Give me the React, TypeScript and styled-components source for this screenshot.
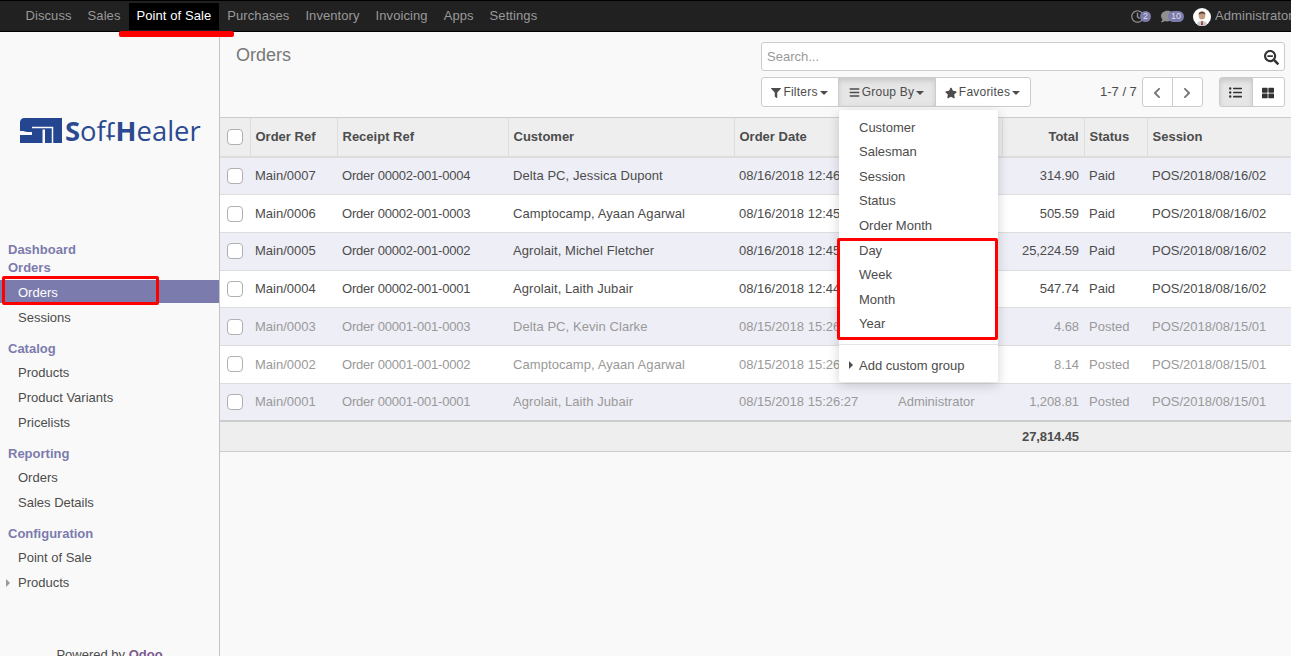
import React from "react";
import styled, { createGlobalStyle } from "styled-components";
import {
  FaBars,
  FaChevronLeft,
  FaChevronRight,
  FaComment,
  FaFilter,
  FaListUl,
  FaRegClock,
  FaSearchMinus,
  FaStar,
  FaThLarge,
} from "react-icons/fa";

const GlobalStyle = createGlobalStyle`
  html, body {
    margin: 0;
    height: 100%;
    overflow: hidden;
    background: #f9f9f9;
    font-family: "Liberation Sans", Arial, sans-serif;
    font-size: 13px;
    line-height: 1.42857;
    color: #4c4c4c;
  }
  * { box-sizing: border-box; }
`;

const Page = styled.div`
  position: relative;
  width: 1291px;
  height: 656px;
  overflow: hidden;
`;

const TopBar = styled.nav`
  display: flex;
  align-items: stretch;
  justify-content: space-between;
  height: 32px;
  padding: 2px 0 1px 17.5px;
  background: #212121;
  border-top: 1px solid #000;
  border-bottom: 1px solid #000;
  letter-spacing: 0.08px;
`;

const NavGroup = styled.div`
  display: flex;
  align-items: stretch;
`;

const NavItem = styled.a<{ $active?: boolean }>`
  display: flex;
  align-items: center;
  padding: 0 8px;
  color: ${(p) => (p.$active ? "#fff" : "#999")};
  background: ${(p) => (p.$active ? "#000" : "transparent")};
`;

const Systray = styled.div`
  display: flex;
  align-items: center;
  width: 160px;
  flex-shrink: 0;
  white-space: nowrap;
  color: #999;
`;

const TrayIcon = styled.span<{ $width: number }>`
  position: relative;
  display: flex;
  align-items: center;
  flex: 0 0 ${(p) => p.$width}px;
  height: 14px;
  font-size: 13px;
  color: #8f8f8f;
`;

const Badge = styled.span<{ $left: number }>`
  position: absolute;
  left: ${(p) => p.$left}px;
  top: 1px;
  min-width: 11px;
  height: 11px;
  padding: 0 3px;
  border-radius: 6px;
  background: #7c7bad;
  color: #ddd;
  font-size: 9px;
  line-height: 11px;
  letter-spacing: 0;
  text-align: center;
`;

const Avatar = styled.svg`
  width: 18px;
  height: 18px;
  margin-right: 4px;
  flex-shrink: 0;
`;

const Body = styled.div`
  display: flex;
  height: 624px;
`;

const Sidebar = styled.aside`
  flex: 0 0 220px;
  display: flex;
  flex-direction: column;
  overflow: hidden;
  border-right: 1px solid #c4c4c4;
  background: #f9f9f9;
  & > * {
    flex-shrink: 0;
  }
`;

const LogoArea = styled.div`
  height: 209px;
  padding: 86px 0 0 20px;
  display: flex;
  align-items: flex-start;
`;

const LogoWord = styled.span`
  font-family: "Open Sans", sans-serif;
  font-size: 27.4px;
  line-height: 26px;
  color: #2b4a91;
  margin-left: 3px;
  white-space: nowrap;
`;

const LogoHeavy = styled.b`
  font-weight: 700;
`;

const LogoFlip = styled.span`
  display: inline-block;
  transform: scaleY(-1) translateY(-1px);
`;

const SectionTitle = styled.div<{ $spaced?: boolean }>`
  padding-left: 8px;
  height: 18px;
  line-height: 18px;
  margin-top: ${(p) => (p.$spaced ? "9.5px" : "0")};
  font-weight: 700;
  color: #7c7bad;
`;

const MenuList = styled.div<{ $top: number }>`
  margin-top: ${(p) => p.$top}px;
`;

const MenuItem = styled.a<{ $active?: boolean; $caret?: boolean }>`
  position: relative;
  display: block;
  padding: ${(p) => (p.$active ? "4px" : "3px")} 0 3px 18px;
  height: ${(p) => (p.$active ? "23px" : "24.8px")};
  margin-bottom: ${(p) => (p.$active ? "2.8px" : "0")};
  color: ${(p) => (p.$active ? "#fff" : "#4c4c4c")};
  background: ${(p) => (p.$active ? "#7c7bad" : "transparent")};
  ${(p) =>
    p.$caret &&
    `&::before {
      content: "";
      position: absolute;
      left: 6px;
      top: 8px;
      border-left: 4px solid #999;
      border-top: 4px solid transparent;
      border-bottom: 4px solid transparent;
    }`}
`;

const PoweredBy = styled.div`
  margin-top: 50.5px;
  text-align: center;
  color: #4c4c4c;
`;

const OdooLink = styled.span`
  font-weight: 700;
  color: #7c5a8f;
`;

const Main = styled.main`
  flex: 1;
  min-width: 0;
`;

const ControlPanel = styled.div`
  display: grid;
  grid-template-columns: 1fr 524px;
  grid-template-rows: 29px 30px;
  row-gap: 6px;
  height: 85px;
  padding: 10px 6px 0 16px;
`;

const Title = styled.h1`
  margin: 0;
  font-size: 18px;
  font-weight: 400;
  line-height: 26px;
  color: #777;
`;

const SearchBox = styled.div`
  display: flex;
  align-items: center;
  justify-content: space-between;
  padding: 2px 5px 0 5px;
  background: #fff;
  border: 1px solid #ccc;
  border-radius: 3px;
  color: #999;
`;

const SearchIcon = styled(FaSearchMinus)`
  width: 15px;
  height: 15px;
  color: #333;
`;

const Tools = styled.div`
  grid-column: 2;
  display: flex;
  align-items: stretch;
`;

const ButtonGroup = styled.div`
  display: flex;
`;

const ToolButton = styled.button<{ $active?: boolean; $w: number }>`
  display: flex;
  align-items: center;
  justify-content: center;
  gap: 2px;
  width: ${(p) => p.$w}px;
  margin-left: -1px;
  padding: 1px 0 0;
  font: inherit;
  font-size: 12px;
  color: #4c4c4c;
  background: ${(p) => (p.$active ? "#e6e6e6" : "#fff")};
  border: 1px solid #ccc;
  box-shadow: ${(p) => (p.$active ? "inset 0 3px 5px rgba(0,0,0,.125)" : "none")};
  &:first-child {
    margin-left: 0;
    border-radius: 3px 0 0 3px;
  }
  &:last-child {
    border-radius: 0 3px 3px 0;
  }
  svg {
    flex-shrink: 0;
  }
`;

const MenuButton = styled(ToolButton)`
  padding-right: 1px;
  letter-spacing: 0.22px;
`;

const Caret = styled.span`
  border-top: 4px solid #4c4c4c;
  border-left: 4px solid transparent;
  border-right: 4px solid transparent;
`;

const PagerText = styled.div`
  display: flex;
  align-items: center;
  margin-left: 69px;
  margin-right: 5px;
  white-space: nowrap;
`;

const ViewSwitch = styled(ButtonGroup)`
  margin-left: 16px;
`;

const ListTable = styled.table`
  width: 1071px;
  table-layout: fixed;
  border-collapse: collapse;
  background: #fff;
`;

const HeadCell = styled.th<{ $w: number; $right?: boolean }>`
  width: ${(p) => p.$w}px;
  height: 39.5px;
  padding: 1px 5px 0;
  text-align: ${(p) => (p.$right ? "right" : "left")};
  font-weight: 700;
  background: #eee;
  border-top: 1px solid #ccc;
  border-bottom: 2px solid #ddd;
  border-left: 1px solid #ddd;
  &:first-child {
    border-left: 0;
  }
  white-space: nowrap;
  overflow: hidden;
`;

const Row = styled.tr<{ $striped: boolean; $muted: boolean }>`
  height: 37.7px;
  background: ${(p) => (p.$striped ? "#eeeef6" : "#fff")};
  color: ${(p) => (p.$muted ? "#999" : "#4c4c4c")};
  border-bottom: 1px solid #ddd;
`;

const Cell = styled.td<{ $right?: boolean; $track?: number }>`
  padding: 1px 5px 0;
  white-space: nowrap;
  overflow: hidden;
  text-align: ${(p) => (p.$right ? "right" : "left")};
  letter-spacing: ${(p) => p.$track ?? 0}px;
`;

const CheckCell = styled.td`
  padding: 0 0 0 7px;
`;

const CheckHead = styled(HeadCell)`
  padding: 0 0 0 7px;
`;

const CheckBox = styled.span`
  display: block;
  width: 16px;
  height: 16px;
  background: #fff;
  border: 1px solid #b0b0b0;
  border-radius: 4px;
`;

const FootRow = styled.tr`
  height: 30.5px;
  background: #eee;
  border-top: 2px solid #ccc;
  border-bottom: 1px solid #ccc;
`;

const FootTotal = styled.td`
  padding: 2px 5px 0;
  text-align: right;
  font-weight: 700;
  letter-spacing: -0.1px;
`;

const Dropdown = styled.div`
  position: absolute;
  left: 839px;
  top: 110px;
  width: 159px;
  padding: 5px 0;
  background: #fff;
  border-radius: 3px;
  box-shadow: 0 3px 12px rgba(0, 0, 0, 0.18);
`;

const DropItem = styled.div`
  position: relative;
  height: 24.55px;
  padding: 3.8px 0 2px 20px;
  color: #4c4c4c;
`;

const DropDivider = styled.div`
  height: 1px;
  margin: 8px 0;
  background: #e5e5e5;
`;

const DropCaret = styled.span`
  position: absolute;
  left: 10px;
  top: 8px;
  border-left: 4px solid #4c4c4c;
  border-top: 4px solid transparent;
  border-bottom: 4px solid transparent;
`;

const Mark = styled.div<{ $l: number; $t: number; $w: number; $h: number; $line?: boolean }>`
  position: absolute;
  left: ${(p) => p.$l}px;
  top: ${(p) => p.$t}px;
  width: ${(p) => p.$w}px;
  height: ${(p) => p.$h}px;
  ${(p) =>
    p.$line
      ? "background: #f00; border-radius: 2px;"
      : "border: 3px solid #f00; border-radius: 2px;"}
`;

const Logo = styled.svg`
  width: 42px;
  height: 25px;
  flex-shrink: 0;
`;

type Order = {
  ref: string;
  receipt: string;
  customer: string;
  date: string;
  total: string;
  status: string;
  session: string;
};

const orders: Order[] = [
  { ref: "Main/0007", receipt: "Order 00002-001-0004", customer: "Delta PC, Jessica Dupont", date: "08/16/2018 12:46", total: "314.90", status: "Paid", session: "POS/2018/08/16/02" },
  { ref: "Main/0006", receipt: "Order 00002-001-0003", customer: "Camptocamp, Ayaan Agarwal", date: "08/16/2018 12:45", total: "505.59", status: "Paid", session: "POS/2018/08/16/02" },
  { ref: "Main/0005", receipt: "Order 00002-001-0002", customer: "Agrolait, Michel Fletcher", date: "08/16/2018 12:45", total: "25,224.59", status: "Paid", session: "POS/2018/08/16/02" },
  { ref: "Main/0004", receipt: "Order 00002-001-0001", customer: "Agrolait, Laith Jubair", date: "08/16/2018 12:44", total: "547.74", status: "Paid", session: "POS/2018/08/16/02" },
  { ref: "Main/0003", receipt: "Order 00001-001-0003", customer: "Delta PC, Kevin Clarke", date: "08/15/2018 15:26", total: "4.68", status: "Posted", session: "POS/2018/08/15/01" },
  { ref: "Main/0002", receipt: "Order 00001-001-0002", customer: "Camptocamp, Ayaan Agarwal", date: "08/15/2018 15:26", total: "8.14", status: "Posted", session: "POS/2018/08/15/01" },
  { ref: "Main/0001", receipt: "Order 00001-001-0001", customer: "Agrolait, Laith Jubair", date: "08/15/2018 15:26:27", total: "1,208.81", status: "Posted", session: "POS/2018/08/15/01" },
];

const navLinks = ["Discuss", "Sales", "Point of Sale", "Purchases", "Inventory", "Invoicing", "Apps", "Settings"];
const groupItems = ["Customer", "Salesman", "Session", "Status", "Order Month", "Day", "Week", "Month", "Year"];

export default function App() {
  return (
    <Page>
      <GlobalStyle />
      <TopBar>
        <NavGroup>
          {navLinks.map((n) => (
            <NavItem key={n} $active={n === "Point of Sale"}>
              {n}
            </NavItem>
          ))}
        </NavGroup>
        <Systray>
          <TrayIcon $width={30}>
            <FaRegClock />
            <Badge $left={9}>2</Badge>
          </TrayIcon>
          <TrayIcon $width={32}>
            <FaComment />
            <Badge $left={7}>10</Badge>
          </TrayIcon>
          <Avatar viewBox="0 0 18 18">
            <circle cx="9" cy="9" r="9" fill="#fff" />
            <path d="M4 17c0-3 2-4 5-4s5 1 5 4c-3 1.500-7 1.500-10 0z" fill="#ccc" />
            <ellipse cx="9" cy="7.500" rx="3.300" ry="4" fill="#c49a80" />
            <path d="M5.500 6.500C5.500 2.500 12.500 2.500 12.500 6.500 10 5 8 5 5.500 6.500z" fill="#5a4638" />
            <path d="M8.400 13h1.200l.4 4H8z" fill="#933" />
          </Avatar>
          Administrator
        </Systray>
      </TopBar>

      <Body>
        <Sidebar>
          <LogoArea>
            <Logo viewBox="0 0 42 25">
              <path fill="#24458f" d="M4 0h38v25H0v-8V4c0-2 2-4 4-4z" />
              <path fill="none" stroke="#f9f9f9" strokeWidth="1.500" d="M12 9.500h20.500V25" />
              <path fill="#f9f9f9" d="M0 13h3c2 1 6 1 9 1v3H0z" />
              <path fill="#f9f9f9" d="M22.500 11.500h2.500V25h-2.500z" />
            </Logo>
            <LogoWord>
              <LogoHeavy>S</LogoHeavy>of<LogoFlip>t</LogoFlip>
              <LogoHeavy>H</LogoHeavy>ealer
            </LogoWord>
          </LogoArea>

          <SectionTitle>Dashboard</SectionTitle>
          <SectionTitle>Orders</SectionTitle>
          <MenuList $top={3}>
            <MenuItem $active>Orders</MenuItem>
            <MenuItem>Sessions</MenuItem>
          </MenuList>

          <SectionTitle $spaced>Catalog</SectionTitle>
          <MenuList $top={3}>
            <MenuItem>Products</MenuItem>
            <MenuItem>Product Variants</MenuItem>
            <MenuItem>Pricelists</MenuItem>
          </MenuList>

          <SectionTitle $spaced>Reporting</SectionTitle>
          <MenuList $top={3}>
            <MenuItem>Orders</MenuItem>
            <MenuItem>Sales Details</MenuItem>
          </MenuList>

          <SectionTitle $spaced>Configuration</SectionTitle>
          <MenuList $top={3}>
            <MenuItem>Point of Sale</MenuItem>
            <MenuItem $caret>Products</MenuItem>
          </MenuList>

          <PoweredBy>
            Powered by <OdooLink>Odoo</OdooLink>
          </PoweredBy>
        </Sidebar>

        <Main>
          <ControlPanel>
            <Title>Orders</Title>
            <SearchBox>
              Search...
              <SearchIcon />
            </SearchBox>
            <Tools>
              <ButtonGroup>
                <MenuButton $w={78}>
                  <FaFilter size={10} />
                  Filters
                  <Caret />
                </MenuButton>
                <MenuButton $w={98} $active>
                  <FaBars size={11} />
                  Group By
                  <Caret />
                </MenuButton>
                <MenuButton $w={96}>
                  <FaStar size={12} />
                  Favorites
                  <Caret />
                </MenuButton>
              </ButtonGroup>
              <PagerText>1-7 / 7</PagerText>
              <ButtonGroup>
                <ToolButton $w={31}>
                  <FaChevronLeft size={12} color="#777" />
                </ToolButton>
                <ToolButton $w={31}>
                  <FaChevronRight size={12} color="#777" />
                </ToolButton>
              </ButtonGroup>
              <ViewSwitch>
                <ToolButton $w={34} $active>
                  <FaListUl size={13} color="#333" />
                </ToolButton>
                <ToolButton $w={33}>
                  <FaThLarge size={12} color="#333" />
                </ToolButton>
              </ViewSwitch>
            </Tools>
          </ControlPanel>

          <ListTable>
            <thead>
              <tr>
                <CheckHead $w={30}>
                  <CheckBox />
                </CheckHead>
                <HeadCell $w={87}>Order Ref</HeadCell>
                <HeadCell $w={171}>Receipt Ref</HeadCell>
                <HeadCell $w={226}>Customer</HeadCell>
                <HeadCell $w={159}>Order Date</HeadCell>
                <HeadCell $w={109} />
                <HeadCell $w={82} $right>
                  Total
                </HeadCell>
                <HeadCell $w={63}>Status</HeadCell>
                <HeadCell $w={144}>Session</HeadCell>
              </tr>
            </thead>
            <tbody>
              {orders.map((o, i) => (
                <Row key={o.ref} $striped={i % 2 === 0} $muted={o.status === "Posted"}>
                  <CheckCell>
                    <CheckBox />
                  </CheckCell>
                  <Cell>{o.ref}</Cell>
                  <Cell $track={-0.2}>{o.receipt}</Cell>
                  <Cell $track={0.07}>{o.customer}</Cell>
                  <Cell>{o.date}</Cell>
                  <Cell>{i === orders.length - 1 ? "Administrator" : ""}</Cell>
                  <Cell $right $track={-0.1}>{o.total}</Cell>
                  <Cell>{o.status}</Cell>
                  <Cell>{o.session}</Cell>
                </Row>
              ))}
            </tbody>
            <tfoot>
              <FootRow>
                <td colSpan={6} />
                <FootTotal>27,814.45</FootTotal>
                <td colSpan={2} />
              </FootRow>
            </tfoot>
          </ListTable>
        </Main>
      </Body>

      <Dropdown>
        {groupItems.map((g) => (
          <DropItem key={g}>{g}</DropItem>
        ))}
        <DropDivider />
        <DropItem>
          <DropCaret />
          Add custom group
        </DropItem>
      </Dropdown>

      <Mark $line $l={119} $t={31} $w={115} $h={5.5} />
      <Mark $l={2} $t={276} $w={157} $h={29} />
      <Mark $l={837} $t={238} $w={161} $h={102} />
    </Page>
  );
}
